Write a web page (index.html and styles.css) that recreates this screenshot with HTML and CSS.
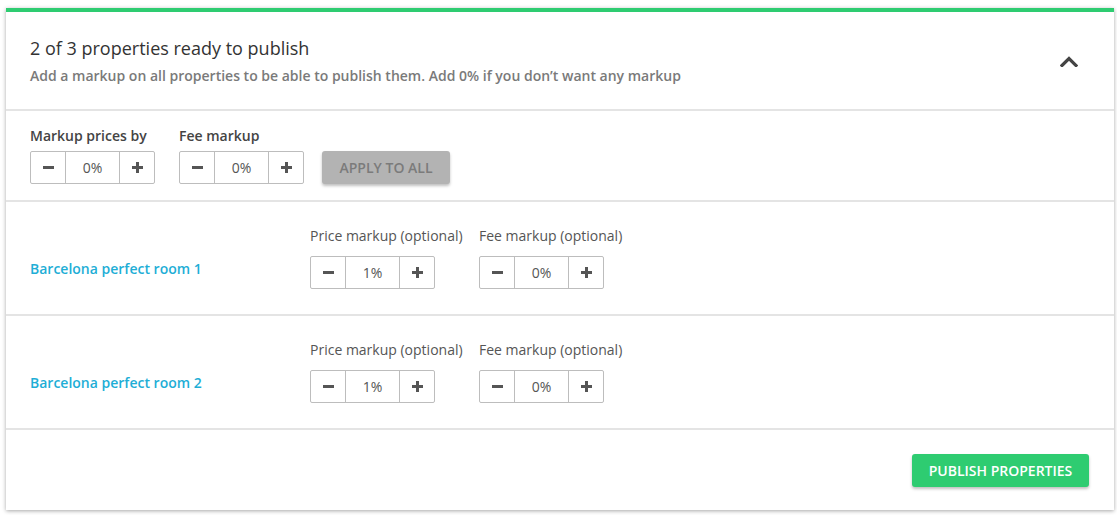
FILE: index.html
```html
<!DOCTYPE html>
<html>
<head>
<meta charset="utf-8">
<link rel="stylesheet" href="styles.css">
</head>
<body>
<div class="page">
  <div class="card">
    <div class="header">
      <div class="header-text">
        <h1 class="title">2 of 3 properties ready to publish</h1>
        <p class="subtitle">Add a markup on all properties to be able to publish them. Add 0% if you don’t want any markup</p>
      </div>
      <button class="collapse" aria-label="Collapse">
        <svg width="18" height="11" viewBox="0 0 18 11"><path d="M2 9.5 L9 2.5 L16 9.5" fill="none" stroke="#444" stroke-width="3.2" stroke-linecap="square"/></svg>
      </button>
    </div>

    <div class="bulk">
      <div class="group">
        <div class="label strong">Markup prices by</div>
        <div class="stepper">
          <span class="step minus"></span><span class="value">0%</span><span class="step plus"></span>
        </div>
      </div>
      <div class="group">
        <div class="label strong">Fee markup</div>
        <div class="stepper">
          <span class="step minus"></span><span class="value">0%</span><span class="step plus"></span>
        </div>
      </div>
      <button class="apply">APPLY TO ALL</button>
    </div>

    <div class="row">
      <div class="name">Barcelona perfect room 1</div>
      <div class="group col-price">
        <div class="label">Price markup (optional)</div>
        <div class="stepper">
          <span class="step minus"></span><span class="value">1%</span><span class="step plus"></span>
        </div>
      </div>
      <div class="group">
        <div class="label">Fee markup (optional)</div>
        <div class="stepper">
          <span class="step minus"></span><span class="value">0%</span><span class="step plus"></span>
        </div>
      </div>
    </div>

    <div class="row">
      <div class="name">Barcelona perfect room 2</div>
      <div class="group col-price">
        <div class="label">Price markup (optional)</div>
        <div class="stepper">
          <span class="step minus"></span><span class="value">1%</span><span class="step plus"></span>
        </div>
      </div>
      <div class="group">
        <div class="label">Fee markup (optional)</div>
        <div class="stepper">
          <span class="step minus"></span><span class="value">0%</span><span class="step plus"></span>
        </div>
      </div>
    </div>

    <div class="footer">
      <button class="publish">PUBLISH PROPERTIES</button>
    </div>
  </div>
</div>
</body>
</html>
```

FILE: styles.css
```css
* { box-sizing: border-box; }
html, body { margin: 0; padding: 0; background: #fff; }
body { font-family: "Open Sans", "Noto Sans", sans-serif; color: #444; }

.page { padding: 8px 3px 5px 6px; }

.card {
  background: #fff;
  border-top: 4px solid #2ecc71;
  box-shadow: 0 1px 4px rgba(0,0,0,0.35);
}

.header {
  display: flex;
  align-items: center;
  justify-content: space-between;
  padding: 24px 36px 24px 24px;
  border-bottom: 2px solid #e4e4e4;
}
.title {
  margin: 0;
  font-size: 18px;
  line-height: 24px;
  font-weight: 400;
  color: #333;
}
.subtitle {
  margin: 7px 0 0;
  font-size: 14px;
  line-height: 18px;
  font-weight: 600;
  color: #7a7a7a;
}
.collapse {
  border: 0;
  background: none;
  padding: 0;
  width: 18px;
  height: 11px;
  display: flex;
  margin-top: 2px;
}

.bulk {
  display: flex;
  align-items: flex-end;
  gap: 24px;
  padding: 16px 24px 16px;
  border-bottom: 2px solid #e4e4e4;
}
.group { display: flex; flex-direction: column; }
.label {
  font-size: 14px;
  line-height: 18px;
  color: #555;
  margin-bottom: 6px;
}
.label.strong { font-weight: 600; color: #444; }

.stepper {
  display: flex;
  width: 125px;
  height: 33px;
  border: 1px solid #bdbdbd;
  border-radius: 2px;
}
.step {
  width: 35px;
  position: relative;
  flex: none;
}
.step.minus { border-right: 1px solid #bdbdbd; }
.step.plus { border-left: 1px solid #bdbdbd; }
.step::before, .step.plus::after {
  content: "";
  position: absolute;
  left: 50%;
  top: 50%;
  width: 11px;
  height: 3px;
  margin: -1.5px 0 0 -5.5px;
  background: #555;
}
.step.plus::after {
  width: 3px;
  height: 11px;
  margin: -5.5px 0 0 -1.5px;
}
.value {
  flex: 1;
  display: flex;
  align-items: center;
  justify-content: center;
  font-size: 14px;
  color: #555;
}

.apply {
  margin-left: -6px;
  width: 128px;
  height: 33px;
  border: 0;
  border-radius: 3px;
  background: #b3b3b3;
  color: #7b7b7b;
  font-family: inherit;
  font-size: 14px;
  font-weight: 600;
  box-shadow: 0 2px 3px rgba(0,0,0,0.25);
}

.row {
  display: flex;
  padding: 25px 24px 25px;
  border-bottom: 2px solid #e4e4e4;
}
.row .label { margin-bottom: 11px; }
.name {
  width: 280px;
  padding-top: 33px;
  font-size: 14px;
  line-height: 18px;
  font-weight: 600;
  color: #1eaed6;
}
.col-price { width: 169px; }

.footer {
  display: flex;
  justify-content: flex-end;
  padding: 24px 25px 23px;
}
.publish {
  width: 177px;
  height: 33px;
  border: 0;
  border-radius: 3px;
  background: #2ecc71;
  color: #fff;
  font-family: inherit;
  font-size: 14px;
  font-weight: 600;
  box-shadow: 0 2px 3px rgba(0,0,0,0.25);
}
```
